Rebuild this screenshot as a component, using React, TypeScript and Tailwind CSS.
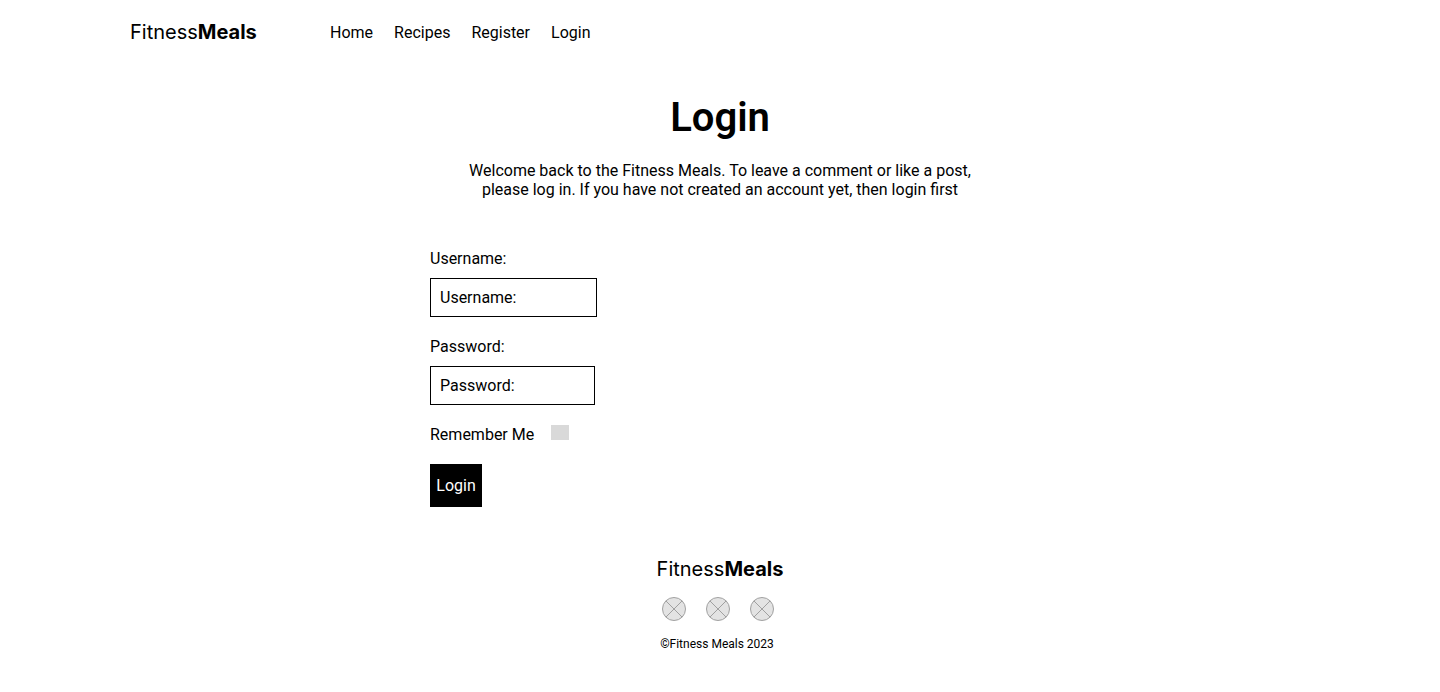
function Brand() {
  return (
    <a href="#" className="font-['Inter',sans-serif] text-xl leading-6 font-normal">
      Fitness<span className="font-bold">Meals</span>
    </a>
  );
}

function SocialIcon({ label }: { label: string }) {
  return (
    <a href="#" aria-label={label}>
      <svg className="block size-6" viewBox="0 0 24 24" fill="none">
        <circle cx="12" cy="12" r="11.5" fill="#e3e3e3" stroke="#a0a0a0" />
        <path d="M3.9 3.9 20.1 20.1M20.1 3.9 3.9 20.1" stroke="#a0a0a0" />
      </svg>
    </a>
  );
}

function Field({ id, label, type, width }: { id: string; label: string; type: string; width: string }) {
  return (
    <div className="flex flex-col items-start gap-[10px]">
      <label htmlFor={id}>{label}:</label>
      <input
        id={id}
        type={type}
        placeholder={`${label}:`}
        className={`h-[39px] border border-black px-[9px] placeholder:text-black ${width}`}
      />
    </div>
  );
}

const links = ["Home", "Recipes", "Register", "Login"];

export default function App() {
  return (
    <div className="min-h-screen bg-white font-['Roboto',sans-serif] text-base leading-[19px] text-black">
      <header className="mx-auto flex max-w-[1180px] items-center pt-5">
        <div className="w-[200px]">
          <Brand />
        </div>
        <nav className="flex gap-[21px]">
          {links.map((link) => (
            <a key={link} href="#">
              {link}
            </a>
          ))}
        </nav>
      </header>

      <main className="mx-auto max-w-[580px] pt-[50px]">
        <h1 className="text-center text-[40px] leading-[47px] font-semibold">Login</h1>
        <p className="mx-auto mt-5 max-w-[520px] text-center">
          Welcome back to the Fitness Meals. To leave a comment or like a post, please log in. If you have not created
          an account yet, then login first
        </p>
        <form className="mt-[50px] flex flex-col items-start gap-5">
          <Field id="username" label="Username" type="text" width="w-[167px]" />
          <Field id="password" label="Password" type="password" width="w-[165px]" />
          <div className="flex gap-[17px]">
            <label htmlFor="remember">Remember Me</label>
            <input
              id="remember"
              type="checkbox"
              className="h-[15px] w-[18px] appearance-none bg-[#d9d9d9] checked:bg-black"
            />
          </div>
          <button type="submit" className="h-[43px] w-[52px] bg-black text-white">
            Login
          </button>
        </form>
      </main>

      <footer className="flex flex-col items-center pt-[50px] pb-10">
        <Brand />
        <div className="mt-4 mr-1 flex gap-5">
          <SocialIcon label="Facebook" />
          <SocialIcon label="Instagram" />
          <SocialIcon label="Twitter" />
        </div>
        <p className="mt-4 mr-[6px] text-xs leading-[14px]">©Fitness Meals 2023</p>
      </footer>
    </div>
  );
}
